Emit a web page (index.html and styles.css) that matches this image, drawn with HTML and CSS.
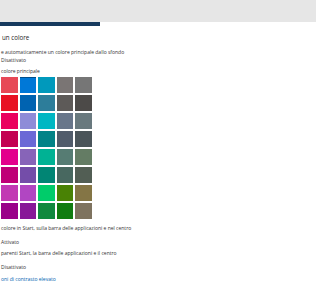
FILE: index.html
```html
<!DOCTYPE html>
<html lang="it">
<head>
  <meta charset="UTF-8">
  <title>Colori</title>
  <link rel="stylesheet" href="styles.css">
</head>
<body>

  <div class="topbar"></div>
  <div class="accent-line"></div>

  <div class="content">
    <h2 class="title">un colore</h2>
    <p class="line gap-m">e automaticamente un colore principale dallo sfondo</p>
    <p class="line">Disattivato</p>
    <p class="line gap-xs">colore principale</p>

    <div class="swatches">
      <span class="swatch" style="background:#e74856"></span>
      <span class="swatch selected" style="background:#0078d7"></span>
      <span class="swatch" style="background:#0099bc"></span>
      <span class="swatch" style="background:#7a7574"></span>
      <span class="swatch" style="background:#767676"></span>

      <span class="swatch" style="background:#e81123"></span>
      <span class="swatch" style="background:#0063b1"></span>
      <span class="swatch" style="background:#2d7d9a"></span>
      <span class="swatch" style="background:#5d5a58"></span>
      <span class="swatch" style="background:#4c4a48"></span>

      <span class="swatch" style="background:#ea005e"></span>
      <span class="swatch" style="background:#8e8cd8"></span>
      <span class="swatch" style="background:#00b7c3"></span>
      <span class="swatch" style="background:#68768a"></span>
      <span class="swatch" style="background:#69797e"></span>

      <span class="swatch" style="background:#c30052"></span>
      <span class="swatch" style="background:#6b69d6"></span>
      <span class="swatch" style="background:#038387"></span>
      <span class="swatch" style="background:#515c6b"></span>
      <span class="swatch" style="background:#4a5459"></span>

      <span class="swatch" style="background:#e3008c"></span>
      <span class="swatch" style="background:#8764b8"></span>
      <span class="swatch" style="background:#00b294"></span>
      <span class="swatch" style="background:#567c73"></span>
      <span class="swatch" style="background:#647c64"></span>

      <span class="swatch" style="background:#bf0077"></span>
      <span class="swatch" style="background:#744da9"></span>
      <span class="swatch" style="background:#018574"></span>
      <span class="swatch" style="background:#486860"></span>
      <span class="swatch" style="background:#525e54"></span>

      <span class="swatch" style="background:#c239b3"></span>
      <span class="swatch" style="background:#b146c2"></span>
      <span class="swatch" style="background:#00cc6a"></span>
      <span class="swatch" style="background:#498205"></span>
      <span class="swatch" style="background:#847545"></span>

      <span class="swatch" style="background:#9a0089"></span>
      <span class="swatch" style="background:#881798"></span>
      <span class="swatch" style="background:#10893e"></span>
      <span class="swatch" style="background:#107c10"></span>
      <span class="swatch" style="background:#7e735f"></span>
    </div>

    <p class="line gap-m">colore in Start, sulla barra delle applicazioni e nel centro</p>
    <p class="line gap-l">Attivato</p>
    <p class="line gap-xs">parenti Start, la barra delle applicazioni e il centro</p>
    <p class="line gap-l">Disattivato</p>
    <a class="line link gap-s" href="#">oni di contrasto elevato</a>
  </div>

</body>
</html>
```

FILE: styles.css
```css
body {
  margin: 0;
  background: #fff;
  font-family: 'Open Sans', 'Noto Sans', sans-serif;
  color: #333;
}

.topbar {
  height: 22px;
  background: #e6e6e6;
}

.accent-line {
  width: 100px;
  height: 4px;
  background: #163a5e;
}

.content {
  padding-left: 1px;
}

.title {
  margin: 7px 0 0 1px;
  font-size: 6.2px;
  font-weight: 400;
  line-height: 10px;
  color: #222;
}

.line {
  display: block;
  margin: 0;
  font-size: 5px;
  line-height: 8px;
}

.gap-xs { margin-top: 3px; }
.gap-s  { margin-top: 4px; }
.gap-m  { margin-top: 5px; }
.gap-l  { margin-top: 6px; }

/* Griglia colori */
.swatches {
  display: grid;
  grid-template-columns: repeat(5, 16.5px);
  grid-auto-rows: 16px;
  gap: 2px 2px;
  margin-top: 2px;
}

.swatch {
  display: block;
}

.selected {
  box-shadow: inset 0 1px 0 rgba(0,0,0,0.35);
}

.link {
  color: #0063b1;
  text-decoration: none;
}
```
